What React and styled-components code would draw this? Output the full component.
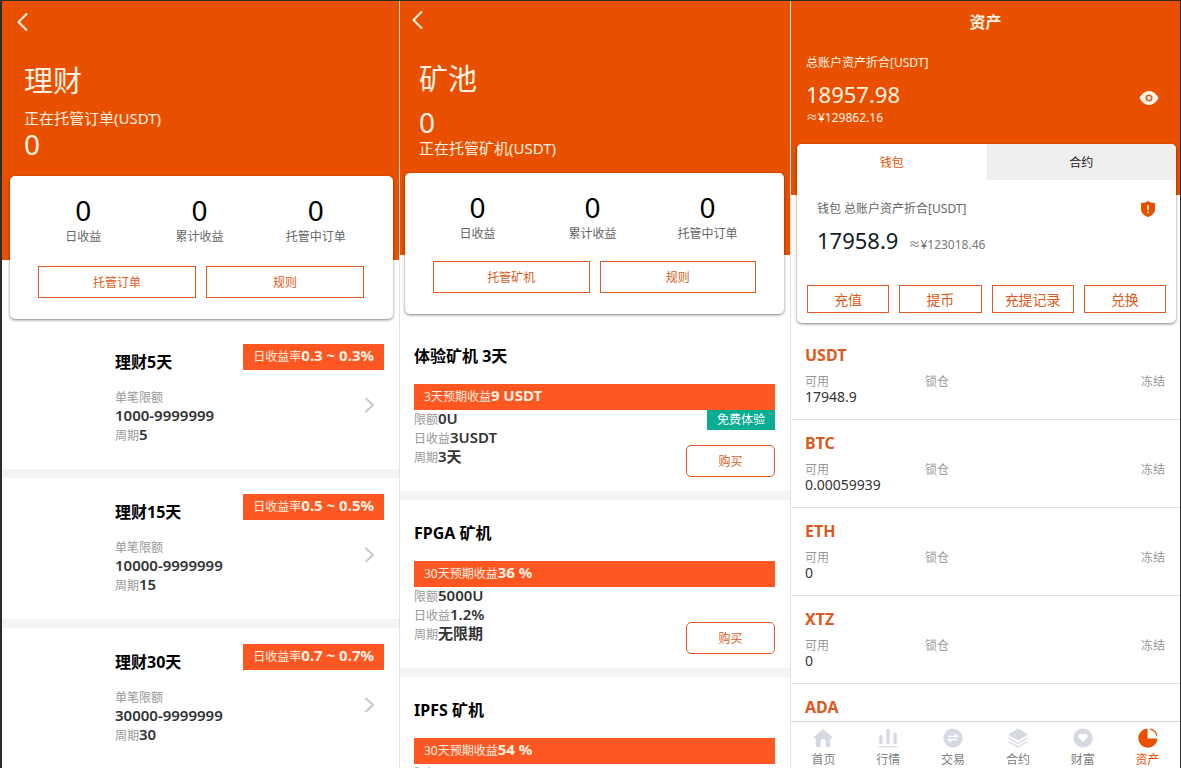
import styled, { createGlobalStyle } from "styled-components";

const GlobalStyle = createGlobalStyle`
  * {
    box-sizing: border-box;
  }
  body {
    margin: 0;
    background: #2e2a2a;
    font-family: "Noto Sans", "Noto Sans CJK SC", sans-serif;
    font-size: 12px;
    color: #222;
  }
  h1, h2, h3, p, ul, dl, dd {
    margin: 0;
    padding: 0;
  }
  ul {
    list-style: none;
  }
  button {
    font-family: inherit;
    cursor: pointer;
  }
`;

const Screens = styled.main`
  display: grid;
  grid-template-columns: 398fr 391fr 389fr;
  height: 100vh;
  padding: 1px 1px 0 2px;
  overflow: hidden;
`;

const Screen = styled.section`
  display: flex;
  flex-direction: column;
  min-width: 0;
  min-height: 0;
  background: #fff;
  border-right: ${(props) => (props.$last ? "0" : "1px solid #e2e2e2")};
`;

const Hero = styled.header`
  flex: none;
  height: ${(props) => props.$height}px;
  padding: ${(props) => props.$top}px 20px 0 ${(props) => props.$left}px;
  background: #e85000;
  color: #fff3e4;
`;

const BackButton = styled.button`
  display: block;
  margin: 0 0 27px -12px;
  padding: 0;
  border: 0;
  background: none;
  color: inherit;
  line-height: 0;
`;

const HeroTitle = styled.h1`
  font-size: 29px;
  font-weight: 400;
  line-height: 44px;
`;

const HeroLabel = styled.p`
  font-size: 15px;
  line-height: 20px;
`;

const HeroNumber = styled.p`
  font-size: 28px;
  line-height: 32px;
`;

const HeroTotals = styled.div`
  display: flex;
  flex-direction: column;
  margin-top: 5px;
`;

const Card = styled.div`
  flex: none;
  margin: ${(props) => props.$margin};
  padding-bottom: ${(props) => props.$bottom}px;
  border-radius: 5px;
  background: #fff;
  box-shadow: 0 1px 3px rgba(0, 0, 0, 0.5);
  overflow: hidden;
`;

const Stats = styled.ul`
  display: grid;
  grid-template-columns: repeat(3, 1fr);
  padding: 17px 19px 0 15px;
  text-align: center;
`;

const StatNumber = styled.p`
  font-size: 28px;
  line-height: 34px;
  color: #000;
`;

const StatLabel = styled.p`
  line-height: 20px;
  color: #666;
`;

const ButtonRow = styled.div`
  display: grid;
  grid-auto-flow: column;
  grid-auto-columns: 1fr;
  gap: 10px;
  margin: ${(props) => props.$margin};
`;

const OutlineButton = styled.button`
  height: ${(props) => props.$height}px;
  padding: 0;
  border: 1px solid #dc5a20;
  border-radius: ${(props) => (props.$round ? "5px" : "0")};
  background: #fff;
  color: #dc5a20;
  font-size: ${(props) => props.$size || 12}px;
`;

const List = styled.ul`
  flex: 1;
  min-height: 0;
  overflow: hidden;
`;

const PlanItem = styled.li`
  display: flex;
  height: 150px;
  padding: 16px 15px 0 113px;
  border-bottom: 9px solid #f4f4f4;
`;

const PlanText = styled.div`
  flex: 1;
`;

const PlanAside = styled.div`
  display: flex;
  flex-direction: column;
  align-items: flex-end;
  gap: 26px;
`;

const ItemTitle = styled.h2`
  font-size: 16px;
  font-weight: 700;
  line-height: 24px;
  color: #000;
`;

const PlanTitle = styled(ItemTitle)`
  margin: 6px 0 14px;
`;

const Line = styled.p`
  height: 19px;
  line-height: 19px;
  color: #999;

  b {
    font-size: 15px;
    font-weight: 600;
    line-height: 1;
    color: #333;
  }
`;

const Tag = styled.p`
  height: 26px;
  padding: 0 10px;
  background: #ff5722;
  color: #fff3e4;
  line-height: 26px;

  b {
    font-size: 15px;
    font-weight: 700;
    line-height: 1;
  }
`;

const ArrowLink = styled.a`
  padding-right: 9px;
  color: #c8c8c8;
  line-height: 0;
`;

const MinerItem = styled.li`
  height: 177px;
  padding: 21px 15px 0 14px;
  border-bottom: 9px solid #f4f4f4;
`;

const MinerBanner = styled(Tag)`
  margin-top: 16px;
`;

const MinerBody = styled.div`
  display: flex;
  justify-content: space-between;
`;

const MinerAside = styled.div`
  display: flex;
  flex-direction: column;
  align-items: flex-end;
  justify-content: flex-end;
  width: 89px;
  height: 67px;
  gap: 15px;

  button {
    flex: none;
    width: 100%;
  }
`;

const FreeBadge = styled.span`
  padding: 0 10px;
  background: #0aac92;
  color: #fff;
  line-height: 20px;
`;

const AssetTitle = styled.h1`
  font-size: 16px;
  font-weight: 600;
  line-height: 24px;
  text-align: center;
`;

const AssetSummary = styled.div`
  display: flex;
  align-items: center;
  justify-content: space-between;
  margin-top: 20px;
  padding-right: 6px;
`;

const SmallText = styled.p`
  line-height: 18px;
`;

const Amount = styled.p`
  font-size: 22px;
  line-height: 30px;
`;

const TotalAmount = styled(Amount)`
  margin-top: 7px;
`;

const IconButton = styled.button`
  padding: 14px 0 0;
  border: 0;
  background: none;
  color: inherit;
  line-height: 0;
`;

const AssetHero = styled(Hero)`
  padding: 9px 15px 0;
`;

const Tabs = styled.div`
  display: grid;
  grid-template-columns: 1fr 1fr;
`;

const Tab = styled.button`
  height: 36px;
  padding: 0;
  border: 0;
  background: ${(props) => (props.$active ? "#fff" : "#efefef")};
  color: ${(props) => (props.$active ? "#e85000" : "#222")};
  font-size: 12px;
`;

const WalletInfo = styled.div`
  display: flex;
  justify-content: space-between;
  align-items: flex-start;
  padding: 20px 20px 0;
  color: #666;
`;

const WalletAmount = styled.div`
  display: flex;
  align-items: baseline;
  gap: 10px;
  margin-top: 7px;
  color: #777;

  ${Amount} {
    color: #111c28;
  }
`;

const CoinItem = styled.li`
  height: 88px;
  padding: 11px 15px 0 14px;
  border-bottom: 1px solid #e2e2e2;
`;

const CoinName = styled.h2`
  font-size: 16px;
  font-weight: 700;
  line-height: 24px;
  color: #dc5a20;
`;

const CoinFields = styled.dl`
  display: grid;
  grid-template-columns: 1fr 1fr 1fr;
  margin-top: 7px;

  div:last-child {
    text-align: right;
  }
  dt {
    line-height: 15px;
    color: #999;
  }
  dd {
    font-size: 14px;
    line-height: 15px;
    color: #333;
  }
`;

const BottomNav = styled.nav`
  flex: none;
  display: grid;
  grid-template-columns: repeat(6, 1fr);
  height: 47px;
  padding-top: 6px;
  border-top: 1px solid #d4d4d4;
  background: #fff;
`;

const NavLink = styled.a`
  display: flex;
  flex-direction: column;
  align-items: center;
  gap: 4px;
  color: ${(props) => (props.$active ? "#e85000" : "#808080")};
  line-height: 16px;
  text-decoration: none;

  svg {
    flex: none;
    color: ${(props) => (props.$active ? "#e85000" : "#d6d9e2")};
  }
`;

const BackIcon = () => (
  <svg width="20" height="20" viewBox="0 0 20 20" fill="none" stroke="currentColor" strokeWidth="2">
    <path d="M15 1.500 6.500 10l8.500 8.500" />
  </svg>
);

const ArrowIcon = () => (
  <svg width="12" height="18" viewBox="0 0 12 18" fill="none" stroke="currentColor" strokeWidth="2">
    <path d="M2.500 2 10 9l-7.500 7" />
  </svg>
);

const EyeIcon = () => (
  <svg width="20" height="16" viewBox="0 0 20 16">
    <path d="M.5 8C3 3.200 6.200 1 10 1s7 2.200 9.500 7c-2.500 4.800-5.700 7-9.500 7S3 12.800.5 8Z" fill="currentColor" />
    <circle cx="10" cy="8" r="2.700" fill="none" stroke="#d0622a" strokeWidth="1.600" />
  </svg>
);

const ShieldIcon = () => (
  <svg width="16" height="18" viewBox="0 0 16 18">
    <path d="M8 1c2 1.400 4.300 2 7 2v6.200c0 3.800-3.200 6.200-7 7.800-3.800-1.600-7-4-7-7.800V3c2.700 0 5-.6 7-2Z" fill="#e85000" />
    <path d="M8 5v5M8 11.500v1.800" stroke="#ffe2c8" strokeWidth="1.800" />
  </svg>
);

const navIcons = {
  home: <path d="M10 .8 1 9v1.500h1.800V19h4.700v-5.500a2.500 2.500 0 0 1 5 0V19h4.700v-8.500H19V9L10 .8Z" fill="currentColor" />,
  market: (
    <g stroke="currentColor" fill="none" strokeLinecap="round">
      <path d="M3 8.500v6M10 2.500v12M17 6.500v8" strokeWidth="3.400" />
      <path d="M1 18.700h18" strokeWidth="1.200" />
    </g>
  ),
  trade: (
    <>
      <circle cx="10" cy="10" r="9.600" fill="currentColor" />
      <path d="M5.500 8.600h9L11.700 6M14.500 11.600h-9L8.300 14.200" fill="none" stroke="#fff" strokeWidth="1.500" />
    </>
  ),
  contract: (
    <>
      <path d="M10 .4 20 6.400l-10 6-10-6Z" fill="currentColor" />
      <path d="m.6 10 9.400 5.600 9.400-5.600M.6 13.600l9.400 5.600 9.400-5.600" fill="none" stroke="currentColor" strokeWidth="1.200" />
    </>
  ),
  wealth: (
    <>
      <circle cx="10" cy="10" r="9.600" fill="currentColor" />
      <path d="M10 14 5.800 9.800a2.500 2.500 0 0 1 1.700-4 3 3 0 0 1 2.500 1 3 3 0 0 1 2.500-1 2.500 2.500 0 0 1 1.700 4Z" fill="#fff" />
    </>
  ),
  assets: (
    <>
      <path d="M9.600.5v9.900h9.900A9.600 9.600 0 1 1 9.600.5Z" fill="currentColor" />
      <path d="M12 1.200a8.300 8.300 0 0 1 6.800 6.800" fill="none" stroke="currentColor" strokeWidth="1.200" />
    </>
  ),
};

const plans = [
  { days: "5", rate: "0.3 ~ 0.3%", limit: "1000-9999999" },
  { days: "15", rate: "0.5 ~ 0.5%", limit: "10000-9999999" },
  { days: "30", rate: "0.7 ~ 0.7%", limit: "30000-9999999" },
];

const miners = [
  { name: "体验矿机 3天", term: "3天", profit: "9 USDT", limit: "0U", daily: "3USDT", cycle: "3天", free: true },
  { name: "FPGA 矿机", term: "30天", profit: "36 %", limit: "5000U", daily: "1.2%", cycle: "无限期" },
  { name: "IPFS 矿机", term: "30天", profit: "54 %", limit: "50000U" },
];

const coins = [
  { name: "USDT", available: "17948.9" },
  { name: "BTC", available: "0.00059939" },
  { name: "ETH", available: "0" },
  { name: "XTZ", available: "0" },
  { name: "ADA" },
];

const navItems = [
  ["home", "首页"],
  ["market", "行情"],
  ["trade", "交易"],
  ["contract", "合约"],
  ["wealth", "财富"],
  ["assets", "资产"],
];

function StatList() {
  return (
    <Stats>
      {["日收益", "累计收益", "托管中订单"].map((label) => (
        <li key={label}>
          <StatNumber>0</StatNumber>
          <StatLabel>{label}</StatLabel>
        </li>
      ))}
    </Stats>
  );
}

function Finance() {
  return (
    <Screen>
      <Hero $height={259} $top={11} $left={22}>
        <BackButton aria-label="返回">
          <BackIcon />
        </BackButton>
        <HeroTitle>理财</HeroTitle>
        <HeroTotals>
          <HeroLabel>正在托管订单(USDT)</HeroLabel>
          <HeroNumber>0</HeroNumber>
        </HeroTotals>
      </Hero>
      <Card $margin="-84px 6px 9px 8px" $bottom={21}>
        <StatList />
        <ButtonRow $margin="19px 29px 0 28px">
          <OutlineButton $height={32}>托管订单</OutlineButton>
          <OutlineButton $height={32}>规则</OutlineButton>
        </ButtonRow>
      </Card>
      <List>
        {plans.map((plan) => (
          <PlanItem key={plan.days}>
            <PlanText>
              <PlanTitle>理财{plan.days}天</PlanTitle>
              <Line>单笔限额</Line>
              <Line>
                <b>{plan.limit}</b>
              </Line>
              <Line>
                周期<b>{plan.days}</b>
              </Line>
            </PlanText>
            <PlanAside>
              <Tag>
                日收益率<b>{plan.rate}</b>
              </Tag>
              <ArrowLink href="#" aria-label="详情">
                <ArrowIcon />
              </ArrowLink>
            </PlanAside>
          </PlanItem>
        ))}
      </List>
    </Screen>
  );
}

function MiningPool() {
  return (
    <Screen>
      <Hero $height={254} $top={9} $left={19}>
        <BackButton aria-label="返回">
          <BackIcon />
        </BackButton>
        <HeroTitle>矿池</HeroTitle>
        <HeroTotals>
          <HeroNumber>0</HeroNumber>
          <HeroLabel>正在托管矿机(USDT)</HeroLabel>
        </HeroTotals>
      </Hero>
      <Card $margin="-82px 6px 9px 5px" $bottom={21}>
        <StatList />
        <ButtonRow $margin="17px 28px 0">
          <OutlineButton $height={32}>托管矿机</OutlineButton>
          <OutlineButton $height={32}>规则</OutlineButton>
        </ButtonRow>
      </Card>
      <List>
        {miners.map((miner) => (
          <MinerItem key={miner.name}>
            <ItemTitle>{miner.name}</ItemTitle>
            <MinerBanner>
              {miner.term}预期收益<b>{miner.profit}</b>
            </MinerBanner>
            <MinerBody>
              <div>
                <Line>
                  限额<b>{miner.limit}</b>
                </Line>
                {miner.daily && (
                  <Line>
                    日收益<b>{miner.daily}</b>
                  </Line>
                )}
                {miner.cycle && (
                  <Line>
                    周期<b>{miner.cycle}</b>
                  </Line>
                )}
              </div>
              <MinerAside>
                {miner.free && <FreeBadge>免费体验</FreeBadge>}
                <OutlineButton $height={32} $round>
                  购买
                </OutlineButton>
              </MinerAside>
            </MinerBody>
          </MinerItem>
        ))}
      </List>
    </Screen>
  );
}

function Assets() {
  return (
    <Screen $last>
      <AssetHero $height={194}>
        <AssetTitle>资产</AssetTitle>
        <AssetSummary>
          <div>
            <SmallText>总账户资产折合[USDT]</SmallText>
            <TotalAmount>18957.98</TotalAmount>
            <SmallText>≈¥129862.16</SmallText>
          </div>
          <IconButton aria-label="隐藏金额">
            <EyeIcon />
          </IconButton>
        </AssetSummary>
      </AssetHero>
      <Card $margin="-51px 4px 9px 6px" $bottom={10}>
        <Tabs role="tablist">
          <Tab role="tab" aria-selected="true" $active>
            钱包
          </Tab>
          <Tab role="tab" aria-selected="false">
            合约
          </Tab>
        </Tabs>
        <WalletInfo>
          <div>
            <SmallText>钱包 总账户资产折合[USDT]</SmallText>
            <WalletAmount>
              <Amount>17958.9</Amount>
              <SmallText>≈¥123018.46</SmallText>
            </WalletAmount>
          </div>
          <ShieldIcon />
        </WalletInfo>
        <ButtonRow $margin="30px 10px 0">
          {["充值", "提币", "充提记录", "兑换"].map((label) => (
            <OutlineButton key={label} $height={28} $size={14}>
              {label}
            </OutlineButton>
          ))}
        </ButtonRow>
      </Card>
      <List>
        {coins.map((coin) => (
          <CoinItem key={coin.name}>
            <CoinName>{coin.name}</CoinName>
            {coin.available && (
              <CoinFields>
                <div>
                  <dt>可用</dt>
                  <dd>{coin.available}</dd>
                </div>
                <div>
                  <dt>锁仓</dt>
                </div>
                <div>
                  <dt>冻结</dt>
                </div>
              </CoinFields>
            )}
          </CoinItem>
        ))}
      </List>
      <BottomNav>
        {navItems.map(([icon, label]) => (
          <NavLink key={icon} href="#" $active={icon === "assets"}>
            <svg width="20" height="20" viewBox="0 0 20 20">
              {navIcons[icon]}
            </svg>
            {label}
          </NavLink>
        ))}
      </BottomNav>
    </Screen>
  );
}

export default function App() {
  return (
    <>
      <GlobalStyle />
      <Screens>
        <Finance />
        <MiningPool />
        <Assets />
      </Screens>
    </>
  );
}
